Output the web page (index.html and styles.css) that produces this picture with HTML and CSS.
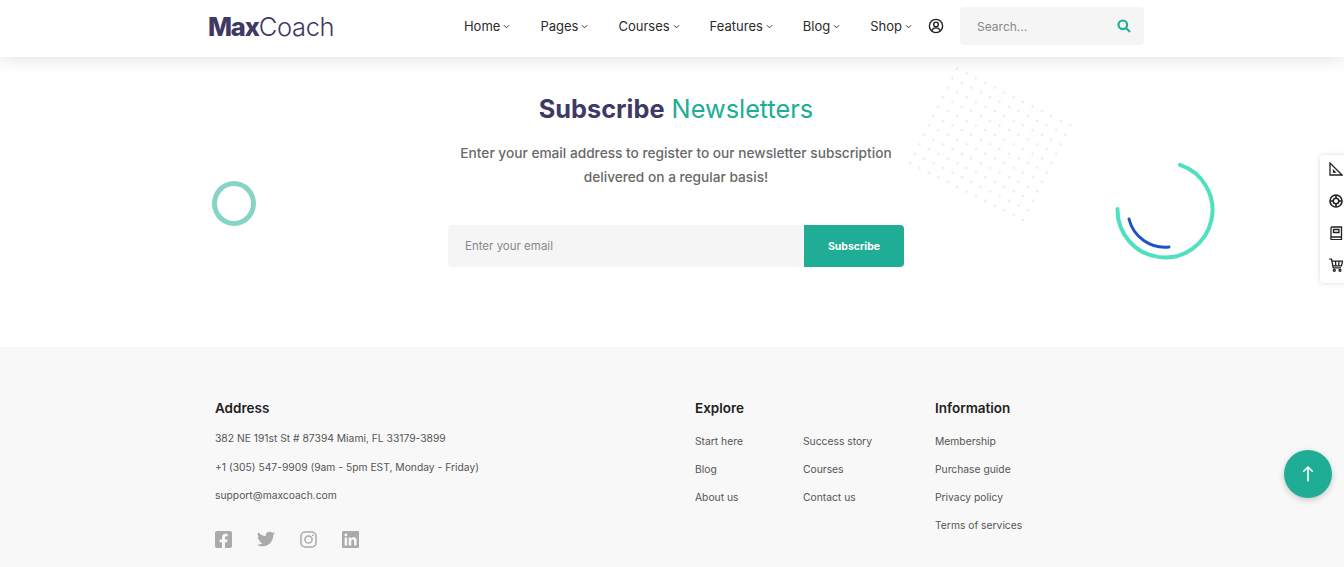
FILE: index.html
```html
<!DOCTYPE html>
<html lang="en">
<head>
    <meta charset="UTF-8">
    <meta name="viewport" content="width=device-width, initial-scale=1.0">
    <title>MaxCoach</title>
    <link rel="stylesheet" href="styles.css">
</head>
<body>
    <header class="site-header">
        <div class="container header-row">
            <a class="logo" href="#"><b>Max</b>Coach</a>
            <nav class="main-nav">
                <a href="#">Home<svg class="chevron" viewBox="0 0 8 8"><path d="M1 2.500 4 5.500 7 2.500"/></svg></a>
                <a href="#">Pages<svg class="chevron" viewBox="0 0 8 8"><path d="M1 2.500 4 5.500 7 2.500"/></svg></a>
                <a href="#">Courses<svg class="chevron" viewBox="0 0 8 8"><path d="M1 2.500 4 5.500 7 2.500"/></svg></a>
                <a href="#">Features<svg class="chevron" viewBox="0 0 8 8"><path d="M1 2.500 4 5.500 7 2.500"/></svg></a>
                <a href="#">Blog<svg class="chevron" viewBox="0 0 8 8"><path d="M1 2.500 4 5.500 7 2.500"/></svg></a>
                <a href="#">Shop<svg class="chevron" viewBox="0 0 8 8"><path d="M1 2.500 4 5.500 7 2.500"/></svg></a>
            </nav>
            <svg class="user-icon" viewBox="0 0 16 16">
                <circle cx="8" cy="8" r="6.600"/>
                <circle cx="8" cy="6.400" r="2.300"/>
                <path d="M3.800 12.800c.6-2 2.200-2.900 4.200-2.900s3.600.9 4.200 2.900"/>
            </svg>
            <div class="header-search">
                <span>Search...</span>
                <svg viewBox="0 0 14 14"><circle cx="5.800" cy="5.800" r="4.300"/><path d="M9 9l4 4"/></svg>
            </div>
        </div>
    </header>

    <section class="subscribe">
        <svg class="deco-dots" width="180" height="170" viewBox="0 0 180 170">
            <defs>
                <pattern id="dots" width="10.540" height="10.540" patternUnits="userSpaceOnUse">
                    <circle cx="5.270" cy="5.270" r="1.100"/>
                </pattern>
            </defs>
            <rect x="0" y="0" width="137" height="116" fill="url(#dots)" transform="translate(54.650 1.930) rotate(26.500)"/>
        </svg>
        <div class="deco-ring"></div>
        <svg class="deco-arcs" width="110" height="110" viewBox="0 0 110 110">
            <path class="arc-green" d="M70 9.900A47.500 47.500 0 1 1 7.500 54"/>
            <path class="arc-blue" d="M19 64A37 37 0 0 0 59 92"/>
        </svg>
        <div class="container subscribe-inner">
            <h2><b>Subscribe</b> <span>Newsletters</span></h2>
            <p>Enter your email address to register to our newsletter subscription<br>delivered on a regular basis!</p>
            <form class="subscribe-form">
                <div class="email-field">Enter your email</div>
                <button type="button">Subscribe</button>
            </form>
        </div>
    </section>

    <footer class="site-footer">
        <div class="container footer-grid">
            <div class="footer-address">
                <h4>Address</h4>
                <p>382 NE 191st St # 87394 Miami, FL 33179-3899</p>
                <p>+1 (305) 547-9909 (9am - 5pm EST, Monday - Friday)</p>
                <p>support@maxcoach.com</p>
                <div class="social">
                    <svg viewBox="0 32 448 448"><path d="M400 32H48A48 48 0 0 0 0 80v352a48 48 0 0 0 48 48h137.250V327.690h-63V256h63v-54.640c0-62.150 37-96.480 93.670-96.480 27.140 0 55.520 4.840 55.520 4.840v61h-31.270c-30.810 0-40.420 19.120-40.420 38.730V256h68.780l-11 71.690h-57.780V480H400a48 48 0 0 0 48-48V80a48 48 0 0 0-48-48z"/></svg>
                    <svg class="tw" viewBox="0 0 512 512"><path d="M459.37 151.716c.325 4.548.325 9.097.325 13.645 0 138.72-105.583 298.558-298.558 298.558-59.452 0-114.68-17.219-161.137-47.106 8.447.974 16.568 1.299 25.34 1.299 49.055 0 94.213-16.568 130.274-44.832-46.132-.975-84.792-31.188-98.112-72.772 6.498.974 12.995 1.624 19.818 1.624 9.421 0 18.843-1.3 27.614-3.573-48.081-9.747-84.143-51.98-84.143-102.985v-1.299c13.969 7.797 30.214 12.67 47.431 13.319-28.264-18.843-46.781-51.005-46.781-87.391 0-19.492 5.197-37.36 14.294-52.954 51.655 63.675 129.3 105.258 216.365 109.807-1.624-7.797-2.599-15.918-2.599-24.04 0-57.828 46.782-104.934 104.934-104.934 30.213 0 57.502 12.67 76.67 33.137 23.715-4.548 46.456-13.645 66.599-25.665-7.798 24.366-24.366 44.833-46.132 57.827 21.117-2.273 41.584-8.122 60.426-16.243-14.292 20.791-32.161 39.308-52.628 54.253z"/></svg>
                    <svg class="ig" viewBox="0 0 18 18"><rect x="1" y="1" width="16" height="16" rx="4.500"/><circle cx="9" cy="9" r="3.800"/><circle class="ig-dot" cx="13.600" cy="4.400" r="1"/></svg>
                    <svg viewBox="0 32 448 448"><path d="M416 32H31.900C14.300 32 0 46.500 0 64.300v383.400C0 465.500 14.300 480 31.900 480H416c17.600 0 32-14.500 32-32.300V64.300c0-17.800-14.400-32.300-32-32.300zM135.400 416H69V202.200h66.500V416zm-33.200-243c-21.300 0-38.500-17.300-38.500-38.500S80.900 96 102.200 96c21.200 0 38.500 17.300 38.500 38.500 0 21.300-17.200 38.500-38.500 38.500zm282.100 243h-66.400V312c0-24.800-.5-56.700-34.500-56.700-34.600 0-39.900 27-39.900 54.900V416h-66.400V202.200h63.700v29.200h.9c8.900-16.800 30.600-34.500 62.900-34.500 67.200 0 79.700 44.300 79.700 101.900V416z"/></svg>
                </div>
            </div>
            <div class="footer-explore">
                <h4>Explore</h4>
                <div class="link-columns">
                    <ul>
                        <li>Start here</li>
                        <li>Blog</li>
                        <li>About us</li>
                    </ul>
                    <ul>
                        <li>Success story</li>
                        <li>Courses</li>
                        <li>Contact us</li>
                    </ul>
                </div>
            </div>
            <div class="footer-info">
                <h4>Information</h4>
                <ul>
                    <li>Membership</li>
                    <li>Purchase guide</li>
                    <li>Privacy policy</li>
                    <li>Terms of services</li>
                </ul>
            </div>
        </div>
    </footer>

    <aside class="side-tools">
        <svg class="ruler" viewBox="0 0 14 14"><path d="M1 1v12h12zM6 10h-1.500v-1.500z"/></svg>
        <svg class="buoy" viewBox="0 0 14 14"><circle cx="7" cy="7" r="6"/><circle cx="7" cy="7" r="2.800"/><path d="M7 1v3.200M7 9.800V13M1 7h3.200M9.800 7H13"/></svg>
        <svg class="book" viewBox="0 0 14 14"><path d="M2 11V2a1 1 0 0 1 1-1h9.500v10H3a1.300 1.300 0 0 0 0 2.600h9.500V11"/><path d="M4.500 3.500h5.500v3H4.500z"/></svg>
        <svg class="cart" viewBox="0 0 14 14"><path d="M.3 1.200h2.200l1.700 8.600h7.800M3 3.200h10.500l-1 4.600H3.900M6.500 3.200l.3 4.600M10 3.200l-.3 4.600"/><circle cx="5.300" cy="12.300" r="1"/><circle cx="11" cy="12.300" r="1"/></svg>
    </aside>

    <a class="back-top" href="#"><svg viewBox="0 0 16 20"><path d="M8 18.500V2M2.500 7.500 8 2l5.500 5.500"/></svg></a>
</body>
</html>
```
FILE: styles.css
```css
* {
    box-sizing: border-box;
}
html, body {
    height: 567px;
}
body {
    margin: 0;
    position: relative;
    overflow: hidden;
    font-family: Inter, "Noto Sans", sans-serif;
    color: #333;
    background-color: #fff;
}
a {
    color: inherit;
    text-decoration: none;
}
.container {
    width: 936px;
    margin-left: 208px;
}

/* header */
.site-header {
    position: relative;
    z-index: 2;
    height: 57px;
    background-color: #fff;
    box-shadow: 0 0 18px rgba(0, 0, 0, 0.14);
}
.header-row {
    display: flex;
    align-items: center;
    height: 52px;
}
.logo {
    font-size: 25.500px;
    font-weight: 300;
    color: #3f3a64;
    width: 256px;
    letter-spacing: -0.3px;
}
.logo b {
    font-weight: 800;
    letter-spacing: -1.2px;
}
.main-nav {
    display: flex;
    gap: 30px;
}
.main-nav a {
    display: flex;
    align-items: center;
    gap: 3px;
    font-size: 13px;
    font-weight: 400;
    color: #2b2b2b;
}
.chevron {
    width: 7px;
    height: 7px;
    fill: none;
    stroke: #333;
    stroke-width: 1.100;
}
.user-icon {
    width: 16px;
    height: 16px;
    margin-left: 16px;
    fill: none;
    stroke: #222;
    stroke-width: 1.400;
}
.header-search {
    display: flex;
    align-items: center;
    justify-content: space-between;
    width: 184px;
    height: 38px;
    margin-left: 16px;
    padding: 0 13px 0 17px;
    background-color: #f5f5f5;
    border-radius: 4px;
    font-size: 12px;
    color: #888;
}
.header-search svg {
    width: 14px;
    height: 14px;
    fill: none;
    stroke: #20ad96;
    stroke-width: 2.200;
}

/* subscribe */
.subscribe {
    position: relative;
    height: 290px;
}
.deco-dots {
    position: absolute;
    left: 900px;
    top: 3px;
    fill: #e4e4f4;
}
.deco-ring {
    position: absolute;
    left: 212px;
    top: 124px;
    width: 44px;
    height: 45px;
    border: 5px solid #85d4c6;
    border-radius: 50%;
}
.deco-arcs {
    position: absolute;
    left: 1110px;
    top: 98px;
    fill: none;
    stroke-linecap: round;
}
.arc-green {
    stroke: #4fe0bf;
    stroke-width: 4;
}
.arc-blue {
    stroke: #1f52c9;
    stroke-width: 3;
}
.subscribe-inner {
    display: flex;
    flex-direction: column;
    align-items: center;
    text-align: center;
    padding-top: 33px;
}
.subscribe h2 {
    margin: 0;
    font-size: 25.300px;
    line-height: 38px;
    font-weight: 400;
}
.subscribe h2 b {
    font-weight: 700;
    color: #3f3a64;
}
.subscribe h2 span {
    color: #20ad96;
}
.subscribe p {
    margin: 13px 0 0;
    font-size: 13.700px;
    font-weight: 500;
    line-height: 24px;
    color: #696969;
}
.subscribe-form {
    display: flex;
    width: 456px;
    height: 42px;
    margin-top: 36px;
}
.email-field {
    flex: 1;
    display: flex;
    align-items: center;
    padding-left: 17px;
    background-color: #f5f5f5;
    border-radius: 4px 0 0 4px;
    font-size: 11.500px;
    color: #888;
}
.subscribe-form button {
    width: 100px;
    border: none;
    border-radius: 0 4px 4px 0;
    background-color: #20ad96;
    color: #fff;
    font-family: inherit;
    font-size: 10.500px;
    font-weight: 700;
}

/* footer */
.site-footer {
    height: 220px;
    background-color: #f8f8f8;
}
.footer-grid {
    display: grid;
    grid-template-columns: 480px 240px 1fr;
    padding: 52px 0 0 7px;
}
.site-footer h4 {
    margin: 0;
    font-size: 13.500px;
    line-height: 18px;
    font-weight: 600;
    color: #222;
}
.site-footer p {
    margin: 0;
    font-size: 10.300px;
    line-height: 18px;
    color: #555;
}
.footer-address h4 {
    margin-bottom: 12px;
}
.footer-address p {
    margin-bottom: 10.500px;
}
.social {
    display: flex;
    align-items: center;
    margin-top: 26px;
    height: 18px;
}
.social svg {
    width: 17px;
    height: 17px;
    margin-right: 25px;
    fill: #aaa;
}
.social .tw {
    width: 18px;
    height: 18px;
}
.social .ig {
    fill: none;
    stroke: #aaa;
    stroke-width: 1.600;
}
.social .ig-dot {
    fill: #aaa;
    stroke: none;
}
.link-columns {
    display: flex;
}
.link-columns ul:first-child {
    width: 108px;
}
.site-footer ul {
    list-style: none;
    margin: 10px 0 0;
    padding: 0;
}
.site-footer li {
    font-size: 10.300px;
    line-height: 28px;
    color: #555;
}

/* fixed bits */
.side-tools {
    position: absolute;
    left: 1320px;
    top: 155px;
    width: 40px;
    height: 128px;
    display: flex;
    flex-direction: column;
    justify-content: space-between;
    padding: 7px 0 11px 9px;
    background-color: #fff;
    border-radius: 4px;
    box-shadow: 0 0 5px rgba(0, 0, 0, 0.15);
}
.side-tools svg {
    width: 14px;
    height: 14px;
    fill: none;
    stroke: #222;
    stroke-width: 1.300;
}
.side-tools .buoy {
    stroke-width: 1.600;
}
.back-top {
    position: absolute;
    left: 1284px;
    top: 450px;
    width: 48px;
    height: 48px;
    display: flex;
    align-items: center;
    justify-content: center;
    border-radius: 50%;
    background-color: #20ad96;
    box-shadow: 0 2px 6px rgba(0, 0, 0, 0.2);
}
.back-top svg {
    width: 14px;
    height: 18px;
    fill: none;
    stroke: #fff;
    stroke-width: 1.800;
}
```
